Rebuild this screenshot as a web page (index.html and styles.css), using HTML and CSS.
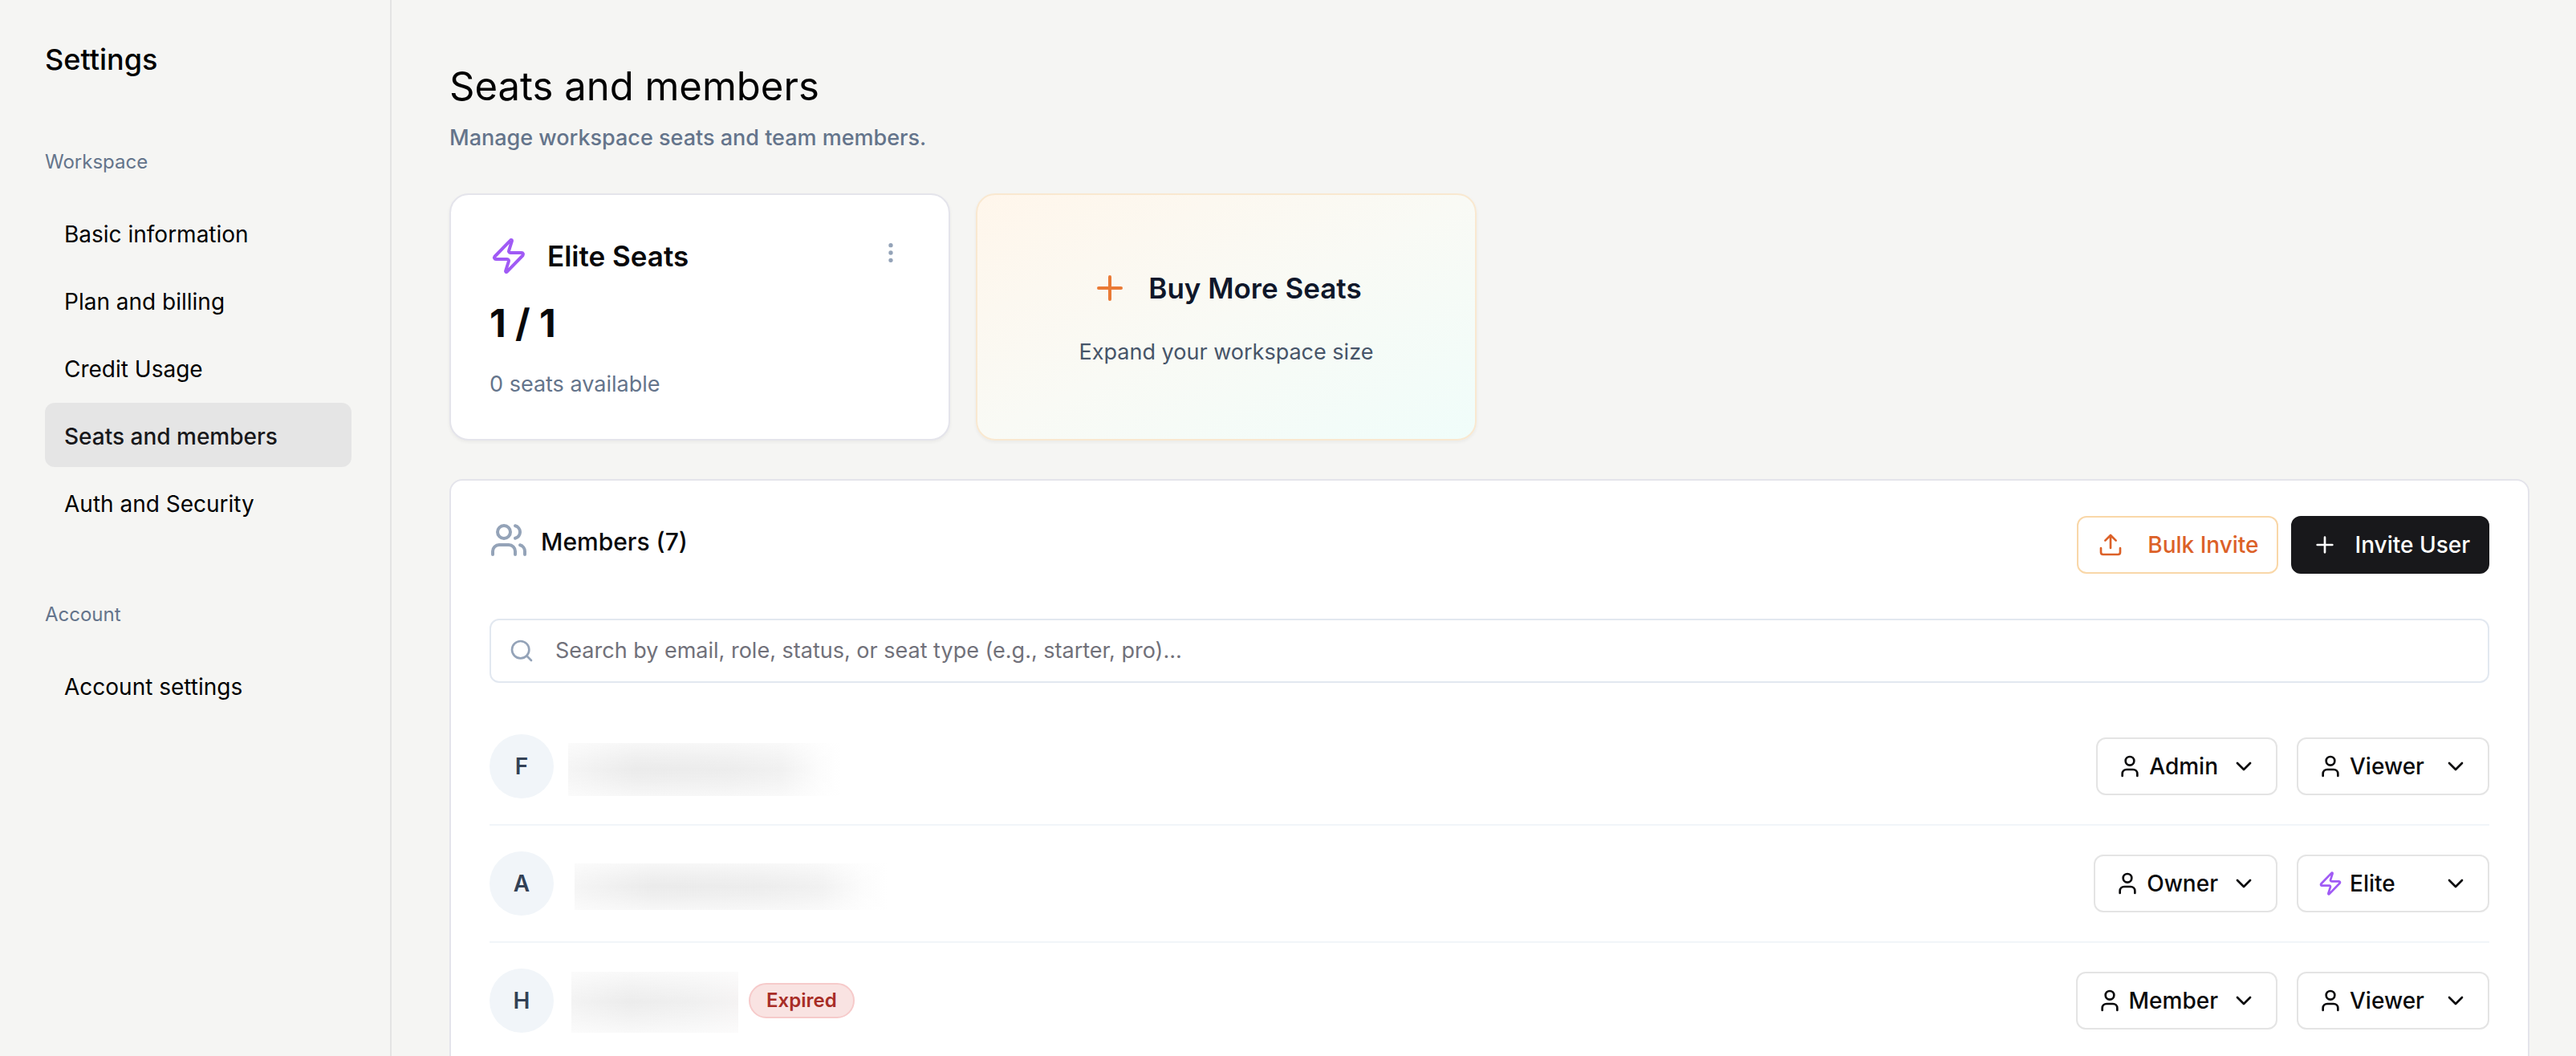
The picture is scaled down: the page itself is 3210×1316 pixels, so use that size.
FILE: index.html
```html
<!DOCTYPE html>
<html lang="en">

<head>
  <meta charset="UTF-8">
  <meta name="viewport" content="width=device-width, initial-scale=1.0">
  <title>Seats and members</title>
  <link rel="stylesheet" href="styles.css">
</head>

<body>
  <!-- Icons -->
  <svg class="sprite" aria-hidden="true">
    <symbol id="zap" viewBox="0 0 24 24">
      <path d="M4 14a1 1 0 0 1-.78-1.63l9.9-10.2a.5.5 0 0 1 .86.46l-1.92 6.02A1 1 0 0 0 13 10h7a1 1 0 0 1 .78 1.63l-9.9 10.2a.5.5 0 0 1-.86-.46l1.92-6.02A1 1 0 0 0 11 14z" />
    </symbol>
    <symbol id="dots" viewBox="0 0 24 24">
      <circle cx="12" cy="12" r="1" />
      <circle cx="12" cy="5" r="1" />
      <circle cx="12" cy="19" r="1" />
    </symbol>
    <symbol id="plus" viewBox="0 0 24 24">
      <path d="M5 12h14M12 5v14" />
    </symbol>
    <symbol id="users" viewBox="0 0 24 24">
      <path d="M16 21v-2a4 4 0 0 0-4-4H6a4 4 0 0 0-4 4v2" />
      <circle cx="9" cy="7" r="4" />
      <path d="M22 21v-2a4 4 0 0 0-3-3.87M16 3.13a4 4 0 0 1 0 7.75" />
    </symbol>
    <symbol id="user" viewBox="0 0 24 24">
      <path d="M19 21v-2a4 4 0 0 0-4-4H9a4 4 0 0 0-4 4v2" />
      <circle cx="12" cy="7" r="4" />
    </symbol>
    <symbol id="upload" viewBox="0 0 24 24">
      <path d="M21 15v4a2 2 0 0 1-2 2H5a2 2 0 0 1-2-2v-4M17 8l-5-5-5 5M12 3v12" />
    </symbol>
    <symbol id="search" viewBox="0 0 24 24">
      <circle cx="11" cy="11" r="8" />
      <path d="m21 21-4.3-4.3" />
    </symbol>
    <symbol id="chevron" viewBox="0 0 24 24">
      <path d="m6 9 6 6 6-6" />
    </symbol>
  </svg>

  <div class="layout">
    <aside class="sidebar">
      <h2>Settings</h2>
      <nav>
        <h3>Workspace</h3>
        <a href="#">Basic information</a>
        <a href="#">Plan and billing</a>
        <a href="#">Credit Usage</a>
        <a href="#" class="active">Seats and members</a>
        <a href="#">Auth and Security</a>
      </nav>
      <nav>
        <h3>Account</h3>
        <a href="#">Account settings</a>
      </nav>
    </aside>

    <main>
      <h1>Seats and members</h1>
      <p class="subtitle">Manage workspace seats and team members.</p>

      <div class="cards">
        <section class="card">
          <div class="card-head">
            <svg class="icon large purple"><use href="#zap" /></svg>
            <h2>Elite Seats</h2>
            <button class="more" aria-label="Seat options"><svg class="icon"><use href="#dots" /></svg></button>
          </div>
          <p class="count">1 / 1</p>
          <p class="available">0 seats available</p>
        </section>
        <button class="card buy">
          <span class="buy-title"><svg class="icon large"><use href="#plus" /></svg>Buy More Seats</span>
          <span class="buy-text">Expand your workspace size</span>
        </button>
      </div>

      <section class="panel">
        <div class="panel-head">
          <svg class="icon large"><use href="#users" /></svg>
          <h2>Members (7)</h2>
          <div class="actions">
            <button class="btn bulk"><svg class="icon"><use href="#upload" /></svg>Bulk Invite</button>
            <button class="btn invite"><svg class="icon"><use href="#plus" /></svg>Invite User</button>
          </div>
        </div>

        <label class="search">
          <svg class="icon"><use href="#search" /></svg>
          <input type="text" aria-label="Search members" placeholder="Search by email, role, status, or seat type (e.g., starter, pro)...">
        </label>

        <ul class="members">
          <li>
            <span class="avatar">F</span>
            <span class="hidden-email first"></span>
            <label class="dropdown">
              <svg class="icon"><use href="#user" /></svg>
              <select aria-label="Role">
                <option selected>Admin</option>
                <option>Member</option>
              </select>
              <svg class="icon"><use href="#chevron" /></svg>
            </label>
            <label class="dropdown seat">
              <svg class="icon"><use href="#user" /></svg>
              <select aria-label="Seat type">
                <option selected>Viewer</option>
                <option>Elite</option>
              </select>
              <svg class="icon"><use href="#chevron" /></svg>
            </label>
          </li>
          <li>
            <span class="avatar">A</span>
            <span class="hidden-email second"></span>
            <label class="dropdown">
              <svg class="icon"><use href="#user" /></svg>
              <select aria-label="Role">
                <option selected>Owner</option>
                <option>Admin</option>
                <option>Member</option>
              </select>
              <svg class="icon"><use href="#chevron" /></svg>
            </label>
            <label class="dropdown seat">
              <svg class="icon purple"><use href="#zap" /></svg>
              <select aria-label="Seat type">
                <option selected>Elite</option>
                <option>Viewer</option>
              </select>
              <svg class="icon"><use href="#chevron" /></svg>
            </label>
          </li>
          <li>
            <span class="avatar">H</span>
            <span class="hidden-email third"></span>
            <span class="badge">Expired</span>
            <label class="dropdown">
              <svg class="icon"><use href="#user" /></svg>
              <select aria-label="Role">
                <option selected>Member</option>
                <option>Admin</option>
              </select>
              <svg class="icon"><use href="#chevron" /></svg>
            </label>
            <label class="dropdown seat">
              <svg class="icon"><use href="#user" /></svg>
              <select aria-label="Seat type">
                <option selected>Viewer</option>
                <option>Elite</option>
              </select>
              <svg class="icon"><use href="#chevron" /></svg>
            </label>
          </li>
        </ul>
      </section>
    </main>
  </div>
</body>

</html>
```

FILE: styles.css
```css
* {
  box-sizing: border-box;
  margin: 0;
  padding: 0;
}

body {
  background: #f5f5f3;
  color: #09090b;
  font-family: Inter, "Liberation Sans", sans-serif;
  font-size: 28px;
  line-height: 40px;
}

button,
input,
select {
  font: inherit;
  color: inherit;
}

button {
  cursor: pointer;
}

.sprite {
  display: none;
}

.icon {
  flex: none;
  width: 32px;
  height: 32px;
  fill: none;
  stroke: currentColor;
  stroke-width: 2;
  stroke-linecap: round;
  stroke-linejoin: round;
}

.icon.large {
  width: 48px;
  height: 48px;
}

.icon.purple {
  color: #a05af5;
}

.layout {
  display: flex;
  height: 100vh;
  overflow: hidden;
}

/* Sidebar */
.sidebar {
  flex: none;
  width: 488px;
  padding: 48px 48px 48px 56px;
  border-right: 2px solid #e4e4e4;
  color: #000;
}

.sidebar h2 {
  margin-bottom: 82px;
  font-size: 36px;
  font-weight: 500;
  line-height: 52px;
}

.sidebar nav {
  display: flex;
  flex-direction: column;
  gap: 4px;
  margin-bottom: 80px;
}

.sidebar h3 {
  margin-bottom: 24px;
  color: #64748b;
  font-size: 24px;
  font-weight: 400;
  line-height: 40px;
}

.sidebar a {
  padding: 22px 24px 18px;
  border-radius: 12px;
  color: inherit;
  text-decoration: none;
}

.sidebar a.active {
  background: #e5e5e5;
  color: #18181b;
  font-weight: 500;
}

/* Main column */
main {
  flex: 1;
  padding: 80px 58px 0 72px;
}

h1 {
  color: #000;
  font-size: 49px;
  font-weight: 400;
  line-height: 56px;
}

.subtitle {
  margin-top: 16px;
  color: #64748b;
  font-size: 27px;
  font-weight: 500;
}

.cards {
  display: grid;
  grid-template-columns: repeat(4, 1fr);
  gap: 32px;
  margin: 49px 0 48px;
}

.card {
  height: 308px;
  padding: 48px;
  border: 2px solid #e4e4eb;
  border-radius: 24px;
  background: #fff;
  box-shadow: 0 2px 4px rgba(0, 0, 0, 0.05);
}

.card-head {
  display: flex;
  align-items: center;
  gap: 24px;
  height: 56px;
}

.card h2,
.buy-title {
  font-size: 35px;
  font-weight: 600;
}

.more {
  display: grid;
  place-items: center;
  width: 48px;
  height: 48px;
  margin: 0 0 8px auto;
  border: 0;
  background: none;
  color: #94a3b8;
}

.count {
  margin-top: 28px;
  font-size: 48px;
  font-weight: 700;
  line-height: 56px;
}

.available {
  margin-top: 28px;
  color: #64748b;
  font-size: 27px;
}

.buy {
  display: flex;
  flex-direction: column;
  align-items: center;
  justify-content: center;
  gap: 36px;
  padding-top: 52px;
  border-color: #f9e8d0;
  background: linear-gradient(to bottom right, #fff6eb, #f9faf5 50%, #f0fdfa);
}

.buy-title {
  display: flex;
  align-items: center;
  gap: 24px;
  color: #0f172a;
}

.buy-title .icon {
  color: #ea7a35;
}

.buy-text {
  color: #475569;
  font-size: 27px;
}

/* Members */
.panel {
  padding: 44px 48px 48px;
  border: 2px solid #e4e4eb;
  border-radius: 16px;
  background: #fff;
}

.panel-head {
  display: flex;
  gap: 16px;
}

.panel-head > .icon {
  margin-top: 6px;
  color: #94a3b8;
}

.panel-head h2 {
  font-size: 30px;
  font-weight: 500;
  line-height: 64px;
}

.actions {
  display: flex;
  gap: 16px;
  margin-left: auto;
}

.btn {
  display: flex;
  align-items: center;
  height: 72px;
  padding: 0 22px 0 24px;
  border: 2px solid #18181b;
  border-radius: 12px;
  background: #18181b;
  color: #fff;
  font-weight: 500;
}

.bulk {
  gap: 30px;
  border-color: #f9d7a8;
  background: #fff;
  color: #dc6128;
}

.invite {
  gap: 22px;
}

.search {
  display: flex;
  align-items: center;
  gap: 26px;
  height: 80px;
  margin: 56px 0 32px;
  padding: 0 22px;
  border: 2px solid #e2e8f0;
  border-radius: 12px;
}

.search .icon {
  color: #94a3b8;
}

.search input {
  flex: 1;
  border: 0;
  outline: 0;
  background: none;
  font-size: 27px;
}

.search input::placeholder {
  color: #71717a;
}

.members {
  list-style: none;
}

.members li {
  display: flex;
  align-items: center;
  padding: 32px 0;
  border-bottom: 2px solid #f1f5f9;
}

.avatar {
  width: 80px;
  height: 80px;
  border-radius: 50%;
  background: #f1f5f9;
  color: #334155;
  font-weight: 600;
  line-height: 80px;
  text-align: center;
}

/* Blurred out addresses */
.hidden-email {
  margin: 8px auto 0 18px;
  background:
    linear-gradient(#ffffff99, #ffffff30 30%, #ffffff00 50%, #ffffff30 70%, #ffffff99),
    linear-gradient(to right, #f5f5f5, #ebebeb 25%, #ededed 60%, #f1f1f1 78%, #fcfcfc 92%, #fff);
}

.first {
  width: 340px;
  height: 66px;
}

.second {
  width: 390px;
  height: 58px;
  margin-left: 26px;
}

.third {
  width: 208px;
  height: 76px;
  margin: 4px 13px 0 22px;
  background:
    linear-gradient(#ffffffb0, #ffffff40 30%, #ffffff00 50%, #ffffff40 70%, #ffffffb0),
    linear-gradient(to right, #f3f3f3, #ececec 35%, #f0f0f0 75%, #f5f3f3);
}

.badge {
  height: 44px;
  margin-right: auto;
  padding: 0 20px;
  border: 2px solid #f6caca;
  border-radius: 22px;
  background: #f9e3e2;
  color: #a82d26;
  font-size: 24px;
  font-weight: 600;
}

.dropdown {
  display: flex;
  align-items: center;
  gap: 8px;
  height: 72px;
  margin-left: 24px;
  padding: 0 24px;
  border: 2px solid #e4e4e4;
  border-radius: 12px;
}

.dropdown select {
  margin-right: 8px;
  border: 0;
  outline: 0;
  appearance: none;
  field-sizing: content;
  background: none;
  font-weight: 500;
}

.dropdown.seat {
  width: 240px;
}

.seat select {
  flex: 1;
}
```
